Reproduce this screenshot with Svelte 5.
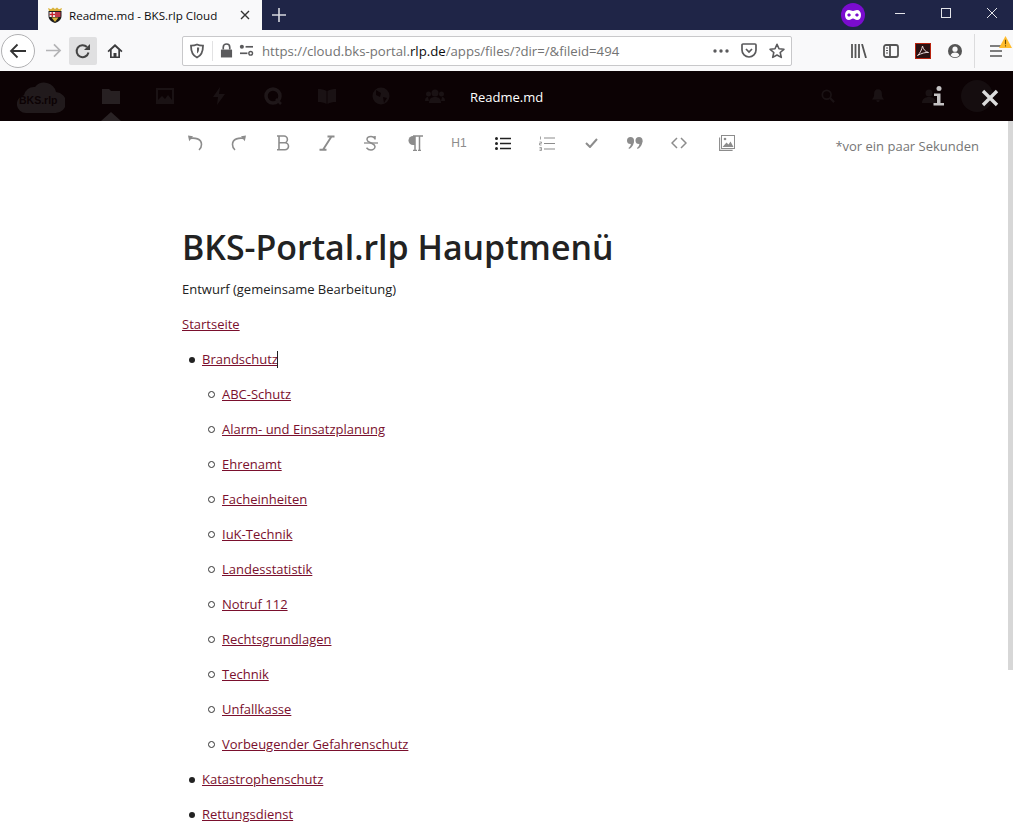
<script>
	const subItems = [
		'ABC-Schutz',
		'Alarm- und Einsatzplanung',
		'Ehrenamt',
		'Facheinheiten',
		'IuK-Technik',
		'Landesstatistik',
		'Notruf 112',
		'Rechtsgrundlagen',
		'Technik',
		'Unfallkasse',
		'Vorbeugender Gefahrenschutz'
	];
</script>

<div class="window">
	<!-- browser tab strip -->
	<div class="tabstrip">
		<div class="tab">
			<svg class="favicon" viewBox="0 0 16 16" width="16" height="16">
				<path d="M1.500 4h13v5c0 3.500-3 6-6.500 7-3.500-1-6.500-3.500-6.500-7z" fill="#1c1c1c" />
				<path d="M2 4L1 1l3 1.200L6 .5 8 2 10 .5l2 1.700L15 1l-1 3z" fill="#d9b23a" />
				<rect x="2.500" y="5" width="5.500" height="5" fill="#eee" />
				<rect x="4.600" y="5" width="1.300" height="5" fill="#c8202c" />
				<rect x="2.500" y="6.800" width="5.500" height="1.300" fill="#c8202c" />
				<rect x="8" y="5" width="5.500" height="5" fill="#c23b4b" />
				<path d="M4.500 10.500h7L8 15z" fill="#d9b23a" />
			</svg>
			<span class="tab-title">Readme.md - BKS.rlp Cloud</span>
			<svg class="tab-close" viewBox="0 0 12 12" width="12" height="12">
				<path d="M2 2l8 8M10 2l-8 8" stroke="#333" stroke-width="1.400" fill="none" />
			</svg>
		</div>
		<svg class="new-tab" viewBox="0 0 14 14" width="14" height="14">
			<path d="M7 0v14M0 7h14" stroke="#d6d7de" stroke-width="1.600" />
		</svg>
		<div class="spacer"></div>
		<div class="private">
			<svg viewBox="0 0 16 10" width="16" height="10">
				<path fill-rule="evenodd" fill="#fff" d="M4 0c1.600 0 2.700 1 4 1s2.400-1 4-1c2.500 0 4 2 4 5s-1.500 5-4 5c-1.600 0-2.700-1.500-4-1.500S5.600 10 4 10C1.500 10 0 8 0 5s1.500-5 4-5zm0 3.500C3 3.500 2.300 4.200 2.300 5S3 6.500 4 6.500 5.800 5.800 5.800 5 5 3.500 4 3.500zm8 0c-1 0-1.800.7-1.800 1.500s.8 1.500 1.800 1.500 1.700-.7 1.700-1.500-.7-1.500-1.700-1.500z" />
			</svg>
		</div>
		<div class="winbtn"><span class="win-min"></span></div>
		<div class="winbtn"><span class="win-max"></span></div>
		<div class="winbtn">
			<svg viewBox="0 0 10 10" width="10" height="10">
				<path d="M0 0l10 10M10 0L0 10" stroke="#e4e5ea" stroke-width="1" />
			</svg>
		</div>
	</div>

	<!-- browser navigation bar -->
	<div class="navbar">
		<div class="back">
			<svg viewBox="0 0 18 16" width="18" height="16">
				<path d="M17 8H2M8.500 1.500L2 8l6.500 6.500" stroke="#333" stroke-width="1.800" fill="none" />
			</svg>
		</div>
		<div class="navbtn">
			<svg viewBox="0 0 18 16" width="17" height="15">
				<path d="M1 8h15M9.500 1.500L16 8l-6.500 6.500" stroke="#b4b4b6" stroke-width="1.800" fill="none" />
			</svg>
		</div>
		<div class="navbtn reload">
			<svg viewBox="0 0 16 16" width="16" height="16">
				<path d="M13.500 9.500A6 6 0 1 1 12 4" stroke="#444" stroke-width="2" fill="none" />
				<path d="M15 1v6H9z" fill="#444" />
			</svg>
		</div>
		<div class="navbtn">
			<svg viewBox="0 0 16 16" width="16" height="16">
				<path d="M8 1L.5 8l1.200 1.200L3 8v7h10V8l1.300 1.200L15.500 8z" fill="#3c3c3e" />
				<path d="M8 3.800l3.300 3v6.700H9.500V10h-3v3.500H4.700V6.800z" fill="#f9f9fa" />
			</svg>
		</div>
		<div class="urlbar">
			<svg class="ub-shield" viewBox="0 0 16 16" width="16" height="16">
				<path d="M8 1.500c2 1 4 1.200 6 1.200 0 6-1.500 9.800-6 11.800C3.500 12.500 2 8.700 2 2.700c2 0 4-.2 6-1.200z" fill="none" stroke="#5a5a5c" stroke-width="1.800" />
				<path d="M8 4.500h2.200c0 3-.6 4.800-2.200 6z" fill="#5a5a5c" />
			</svg>
			<span class="ub-sep"></span>
			<svg class="ub-lock" viewBox="0 0 14 16" width="13" height="15">
				<path d="M1 7h12v8.500H1z" fill="#5a5a5c" />
				<path d="M3.500 7V4.500a3.500 3.500 0 0 1 7 0V7" fill="none" stroke="#5a5a5c" stroke-width="1.800" />
			</svg>
			<svg class="ub-perm" viewBox="0 0 16 14" width="15" height="13">
				<circle cx="3" cy="3" r="2.200" fill="#5a5a5c" />
				<path d="M7 3h8" stroke="#5a5a5c" stroke-width="1.800" />
				<circle cx="12.500" cy="10" r="2" fill="none" stroke="#5a5a5c" stroke-width="1.500" />
				<path d="M1 10h8" stroke="#5a5a5c" stroke-width="1.800" />
			</svg>
			<span class="url">https://cloud.bks-portal.<b>rlp.de</b>/apps/files/?dir=/&amp;fileid=494</span>
			<svg class="ub-dots" viewBox="0 0 16 4" width="16" height="4">
				<circle cx="2" cy="2" r="1.700" fill="#5a5a5c" />
				<circle cx="8" cy="2" r="1.700" fill="#5a5a5c" />
				<circle cx="14" cy="2" r="1.700" fill="#5a5a5c" />
			</svg>
			<svg class="ub-pocket" viewBox="0 0 16 15" width="16" height="15">
				<path d="M2 1h12a1 1 0 0 1 1 1v5a7 7 0 0 1-14 0V2a1 1 0 0 1 1-1z" fill="none" stroke="#5a5a5c" stroke-width="1.700" />
				<path d="M5 6l3 3 3-3" fill="none" stroke="#5a5a5c" stroke-width="1.700" />
			</svg>
			<svg class="ub-star" viewBox="0 0 16 16" width="16" height="16">
				<path d="M8 1.300l2 4.500 4.900.5-3.700 3.200 1.100 4.900L8 12l-4.300 2.400 1.100-4.900L1.100 6.300 6 5.800z" fill="none" stroke="#5a5a5c" stroke-width="1.600" stroke-linejoin="round" />
			</svg>
		</div>
		<div class="tools">
			<svg viewBox="0 0 16 14" width="16" height="14">
				<path d="M1 0v14M4.500 0v14M8 0v14" stroke="#555" stroke-width="1.800" />
				<path d="M11 0l4 14" stroke="#555" stroke-width="1.800" />
			</svg>
			<svg viewBox="0 0 16 14" width="16" height="14">
				<rect x="1" y="1" width="14" height="12" rx="2" fill="none" stroke="#555" stroke-width="1.800" />
				<path d="M7 1v12" stroke="#555" stroke-width="1.800" />
				<path d="M3 4h2M3 6.500h2M3 9h2" stroke="#555" stroke-width="1.200" />
			</svg>
			<svg viewBox="0 0 16 16" width="16" height="16">
				<rect x=".5" y=".5" width="15" height="15" fill="#2b1212" stroke="#b8230f" />
				<path d="M2.500 12.500C5 10.500 7 6 7.500 3c.5 3 3 6 6 6.500-3-.3-7 .7-11 3z" fill="none" stroke="#e8d8d8" stroke-width="1" />
			</svg>
			<svg viewBox="0 0 16 16" width="16" height="16">
				<circle cx="8" cy="8" r="7" fill="#555" />
				<circle cx="8" cy="6.200" r="2.600" fill="#f9f9fa" />
				<path d="M3.500 12.200c1-2 2.500-2.700 4.500-2.700s3.500.7 4.500 2.700a6 6 0 0 1-9 0z" fill="#f9f9fa" />
			</svg>
		</div>
		<span class="tool-sep"></span>
		<div class="menu">
			<svg viewBox="0 0 13 12" width="13" height="12">
				<path d="M0 1h12M0 6h12M0 11h12" stroke="#555" stroke-width="1.600" />
			</svg>
			<svg class="warn" viewBox="0 0 12 11" width="13" height="12">
				<path d="M6 0l6 11H0z" fill="#ffbd2e" />
				<path d="M6 3.500v4M6 8.500v1.200" stroke="#6b4a00" stroke-width="1" />
			</svg>
		</div>
	</div>

	<!-- nextcloud header, dimmed by the viewer overlay -->
	<header class="cloudbar">
		<div class="logo">
			<svg viewBox="0 0 48 36" width="48" height="36">
				<path d="M9 35a9 9 0 0 1-2-17.800A10 10 0 0 1 18 9 12 12 0 0 1 39 14a10.500 10.500 0 0 1-1 21z" fill="#211a1c" />
			</svg>
			<span>BKS.rlp</span>
		</div>
		<div class="apps">
			<div class="app active">
				<svg viewBox="0 0 18 16" width="18" height="16"><path d="M0 1h7l2 2h9v13H0z" fill="#272022" /></svg>
			</div>
			<div class="app">
				<svg viewBox="0 0 18 16" width="18" height="16"><path fill-rule="evenodd" d="M0 0h18v16H0zM2 2v10l4-4 3 3 3-4 4 5V2z" fill="#1a1214" /></svg>
			</div>
			<div class="app">
				<svg viewBox="0 0 12 18" width="12" height="18"><path d="M7 0L0 10h5l-1 8 8-11H6z" fill="#1a1214" /></svg>
			</div>
			<div class="app">
				<svg viewBox="0 0 18 18" width="18" height="18"><circle cx="9" cy="9" r="7" fill="none" stroke="#1f1719" stroke-width="3.500" /><path d="M12 12l5 5" stroke="#1f1719" stroke-width="2.500" /></svg>
			</div>
			<div class="app">
				<svg viewBox="0 0 18 16" width="18" height="16"><path d="M0 1c3 0 6 .5 8.500 2v13C6 14.500 3 14 0 14zM18 1c-3 0-6 .5-8.500 2v13c2.500-1.500 5.500-2 8.500-2z" fill="#1a1214" /></svg>
			</div>
			<div class="app">
				<svg viewBox="0 0 18 18" width="18" height="18"><circle cx="9" cy="9" r="8.500" fill="#1a1214" /><path d="M4 3l5 3-1 4-4-2zM11 10l4 1-3 5z" fill="#0c0204" /></svg>
			</div>
			<div class="app">
				<svg viewBox="0 0 20 14" width="20" height="14"><circle cx="10" cy="4" r="3.500" fill="#1a1214" /><circle cx="3.500" cy="5" r="2.500" fill="#1a1214" /><circle cx="16.500" cy="5" r="2.500" fill="#1a1214" /><path d="M4 14c0-4 2-6 6-6s6 2 6 6zM0 12c0-2.500 1-4 3-4l1 4zM20 12c0-2.500-1-4-3-4l-1 4z" fill="#1a1214" /></svg>
			</div>
		</div>
		<div class="viewer-title">Readme.md</div>
		<div class="right-icons">
			<svg viewBox="0 0 16 16" width="14" height="14"><circle cx="6.500" cy="6.500" r="5" fill="none" stroke="#1a1214" stroke-width="2" /><path d="M10 10l5 5" stroke="#1a1214" stroke-width="2.500" /></svg>
			<svg viewBox="0 0 14 16" width="12" height="14"><path d="M7 0c3 0 4.500 2 4.500 5 0 4 1 5 2.500 7H0c1.500-2 2.500-3 2.500-7C2.500 2 4 0 7 0zM5 13h4a2 2 0 0 1-4 0z" fill="#1a1214" /></svg>
			<svg viewBox="0 0 16 14" width="16" height="14"><circle cx="8" cy="4" r="3.500" fill="#1a1214" /><path d="M1 14c0-4 3-6 7-6s7 2 7 6z" fill="#1a1214" /></svg>
			<div class="avatar"></div>
		</div>
		<div class="viewer-actions">
			<svg viewBox="0 0 12 20" width="12" height="20">
				<circle cx="6" cy="2.500" r="2.500" fill="#c4c2c3" />
				<path d="M1 7.500h6.500V17H11v2.500H.5V17h3.500v-7H1z" fill="#c4c2c3" />
			</svg>
			<svg class="close" viewBox="0 0 18 18" width="18" height="18">
				<path d="M2 2l14 14M16 2L2 16" stroke="#dcdcdc" stroke-width="3.400" />
			</svg>
		</div>
	</header>

	<!-- editor -->
	<div class="body">
		<main class="page">
			<div class="menubar">
				<button aria-label="Rückgängig">
					<svg viewBox="0 0 16 16" width="16" height="16"><path d="M2 3.500c6-1 12.500 0 12.500 6 0 2.500-1 4.300-2.500 5.500" fill="none" stroke="#8c8c8c" stroke-width="1.600" /><path d="M1 .5l5 .8-3.800 5z" fill="#8c8c8c" /></svg>
				</button>
				<button aria-label="Wiederholen">
					<svg viewBox="0 0 16 16" width="16" height="16"><path d="M14 3.500c-6-1-12.500 0-12.500 6 0 2.500 1 4.300 2.500 5.500" fill="none" stroke="#8c8c8c" stroke-width="1.600" /><path d="M15 .5l-5 .8 3.800 5z" fill="#8c8c8c" /></svg>
				</button>
				<button aria-label="Fett">
					<svg viewBox="0 0 14 16" width="14" height="16"><path d="M1 1h7a3.300 3.300 0 0 1 0 6.800H3M3 7.800h6a3.500 3.500 0 0 1 0 7H1M3 1v13.800" fill="none" stroke="#8c8c8c" stroke-width="1.600" /></svg>
				</button>
				<button aria-label="Kursiv">
					<svg viewBox="0 0 16 16" width="16" height="16"><path d="M8.500 1.500H15.500M.5 14.800h7M12.500 1.500L4 14.800" fill="none" stroke="#8c8c8c" stroke-width="1.900" /></svg>
				</button>
				<button aria-label="Durchgestrichen">
					<svg viewBox="0 0 16 16" width="16" height="16"><path d="M1 8h14" stroke="#8c8c8c" stroke-width="1.300" /><path d="M12 3.500C11 2 9.500 1.500 8 1.500 6 1.500 4 2.500 4 4.500S6 7 8 8s4 1.500 4 3.500-2 3.500-4 3.500-3.500-1-4.500-2.300M12 1v3.500" fill="none" stroke="#8c8c8c" stroke-width="1.500" /></svg>
				</button>
				<button aria-label="Absatz">
					<svg viewBox="0 0 16 16" width="16" height="16"><path d="M6 1h10M8 1v14.500M12.500 1v14.500M6 15.500h4M11 15.500h3" fill="none" stroke="#8c8c8c" stroke-width="1.500" /><path d="M6 1a4.500 4.500 0 0 0 0 9h2V1z" fill="#8c8c8c" /></svg>
				</button>
				<button class="text-btn">H1</button>
				<button aria-label="Liste">
					<svg viewBox="0 0 16 13" width="16" height="13"><circle cx="1.500" cy="1.500" r="1.500" fill="#222" /><circle cx="1.500" cy="6.500" r="1.500" fill="#222" /><circle cx="1.500" cy="11.500" r="1.500" fill="#222" /><path d="M5 1.500h11M5 6.500h11M5 11.500h11" stroke="#222" stroke-width="1.300" /></svg>
				</button>
				<button aria-label="Nummerierte Liste">
					<svg viewBox="0 0 16 15" width="16" height="15"><path d="M5 2h11M5 7.500h11M5 13h11" stroke="#8c8c8c" stroke-width="1.200" /><path d="M1.500.5v3M.5 6h2v1.300h-2V9h2M.5 11.500h2v3h-2M.5 13h2" fill="none" stroke="#8c8c8c" stroke-width=".8" /></svg>
				</button>
				<button aria-label="Aufgabe">
					<svg viewBox="0 0 13 10" width="13" height="10"><path d="M1 5l4 4 7-8" fill="none" stroke="#8c8c8c" stroke-width="2" /></svg>
				</button>
				<button aria-label="Zitat">
					<svg viewBox="0 0 16 12" width="16" height="12"><circle cx="3.500" cy="3.500" r="3.500" fill="#8c8c8c" /><circle cx="12" cy="3.500" r="3.500" fill="#8c8c8c" /><path d="M7 3.500C7 8 4.500 11 2 12l-.5-1C3 10 4 8 4 6zM15.500 3.500c0 4.500-2.500 7.500-5 8.500L10 11c1.500-1 2.500-3 2.500-5z" fill="#8c8c8c" /></svg>
				</button>
				<button aria-label="Code">
					<svg viewBox="0 0 16 12" width="16" height="12"><path d="M6 1L1 6l5 5M10 1l5 5-5 5" fill="none" stroke="#8c8c8c" stroke-width="1.500" /></svg>
				</button>
				<button class="image-btn" aria-label="Bild">
					<svg viewBox="0 0 16 16" width="16" height="16"><path d="M.6 2.500V15.400h13" fill="none" stroke="#8c8c8c" stroke-width="1.100" /><rect x="2.500" y=".5" width="13" height="13" fill="none" stroke="#8c8c8c" /><circle cx="6" cy="4" r="1.300" fill="#8c8c8c" /><path d="M3.500 12l4-4.500 2 2 2-3 3 5.500z" fill="#8c8c8c" /></svg>
				</button>
				<span class="saved">*vor ein paar Sekunden</span>
			</div>

			<article class="content">
				<h1>BKS-Portal.rlp Hauptmenü</h1>
				<p>Entwurf (gemeinsame Bearbeitung)</p>
				<p><a href="#start">Startseite</a></p>
				<ul>
					<li>
						<p><a href="#brand">Brandschutz</a><span class="caret"></span></p>
						<ul>
							{#each subItems as item}
								<li><p><a href="#sub">{item}</a></p></li>
							{/each}
						</ul>
					</li>
					<li><p><a href="#kat">Katastrophenschutz</a></p></li>
					<li><p><a href="#ret">Rettungsdienst</a></p></li>
				</ul>
			</article>
		</main>
		<div class="scrollbar"><div class="thumb"></div></div>
	</div>
</div>

<style>
	:global(body) {
		margin: 0;
		overflow: hidden;
		background: #fff;
	}

	.window {
		display: flex;
		flex-direction: column;
		height: 836px;
		overflow: hidden;
		font-family: "Open Sans", "Noto Sans", sans-serif;
		color: #222;
	}

	/* tab strip */
	.tabstrip {
		display: flex;
		align-items: center;
		height: 30px;
		flex: none;
		background: #1f2547;
		padding-left: 38px;
		margin-right: -2px;
	}

	.tab {
		display: flex;
		align-items: center;
		align-self: stretch;
		width: 224px;
		box-sizing: border-box;
		padding: 0 10px 0 9px;
		background: #f9f9fa;
	}

	.tab-title {
		margin-left: 6px;
		font: 11.600px "Open Sans", sans-serif;
		color: #0c0c0d;
		white-space: nowrap;
		flex: 1;
	}

	.tab-close {
		margin-right: 1px;
	}

	.new-tab {
		margin-left: 10px;
	}

	.spacer {
		flex: 1;
	}

	.private {
		display: flex;
		align-items: center;
		justify-content: center;
		width: 24px;
		height: 24px;
		border-radius: 50%;
		background: #7a0ccf;
		margin-right: 12px;
	}

	.winbtn {
		display: flex;
		align-items: center;
		justify-content: center;
		width: 46px;
		height: 26px;
		margin-bottom: 4px;
	}

	.win-min {
		display: block;
		width: 10px;
		height: 1px;
		background: #e4e5ea;
	}

	.win-max {
		display: block;
		width: 8px;
		height: 8px;
		border: 1px solid #e4e5ea;
	}

	/* nav bar */
	.navbar {
		display: flex;
		align-items: center;
		height: 41px;
		flex: none;
		box-sizing: border-box;
		padding-left: 1px;
		background: #f9f9fa;
	}

	.back {
		display: flex;
		align-items: center;
		justify-content: center;
		width: 32px;
		height: 32px;
		border: 1px solid #b1b1b3;
		border-radius: 50%;
		background: #fff;
	}

	.navbtn {
		display: flex;
		align-items: center;
		justify-content: center;
		width: 28px;
		height: 28px;
		border-radius: 2px;
	}

	.back + .navbtn {
		margin-left: 2px;
		width: 32px;
	}

	.reload {
		background: #e0e0e1;
	}

	.reload + .navbtn {
		margin-left: 4px;
	}

	.urlbar {
		display: flex;
		align-items: center;
		box-sizing: border-box;
		width: 610px;
		height: 30px;
		margin-left: 53px;
		background: #fff;
		border: 1px solid #c8c8ca;
		border-radius: 2px;
	}

	.ub-shield {
		margin-left: 6px;
	}

	.ub-sep {
		width: 1px;
		height: 20px;
		margin: 0 7px;
		background: #e2e2e3;
	}

	.ub-perm {
		margin-left: 6px;
	}

	.url {
		flex: 1;
		margin-left: 8px;
		font: 13.200px "Open Sans", sans-serif;
		color: #737373;
		white-space: nowrap;
	}

	.url b {
		font-weight: 400;
		color: #0c0c0d;
	}

	.ub-pocket {
		margin-left: 12px;
	}

	.ub-star {
		margin: 0 6px 0 12px;
	}

	.tools {
		display: flex;
		align-items: center;
		gap: 16px;
		margin-left: 59px;
	}

	.tool-sep {
		width: 1px;
		height: 34px;
		margin-left: 11px;
		background: #dcdcdd;
	}

	.menu {
		position: relative;
		display: flex;
		margin-left: 15px;
	}

	.warn {
		position: absolute;
		left: 9px;
		top: -9px;
	}

	/* dimmed cloud header */
	.cloudbar {
		position: relative;
		display: flex;
		align-items: center;
		flex: none;
		height: 50px;
		background: #0c0204;
	}

	.logo {
		position: relative;
		display: flex;
		margin-left: 17px;
	}

	.logo span {
		position: absolute;
		left: 2px;
		top: 16px;
		font: bold 10.500px "Liberation Sans", sans-serif;
		color: #0c0204;
	}

	.apps {
		display: flex;
		margin-left: 19px;
		align-self: stretch;
	}

	.app {
		position: relative;
		display: flex;
		align-items: center;
		justify-content: center;
		width: 54px;
	}

	.app.active::after {
		content: "";
		position: absolute;
		bottom: 0;
		left: 50%;
		margin-left: -10px;
		border: 10px solid transparent;
		border-top: 0;
		border-bottom: 9px solid #2a2325;
	}

	.viewer-title {
		position: absolute;
		left: 0;
		right: 0;
		margin-top: 2px;
		text-align: center;
		font: 13px "Open Sans", sans-serif;
		color: #fff;
	}

	.right-icons {
		display: flex;
		align-items: center;
		margin-left: auto;
		padding-right: 20px;
		gap: 37px;
	}

	.avatar {
		width: 32px;
		height: 32px;
		margin-left: -13px;
		border-radius: 50%;
		background: #150d0f;
	}

	.viewer-actions {
		position: absolute;
		top: 15px;
		right: 14px;
		display: flex;
		align-items: flex-start;
		gap: 36px;
	}

	.close {
		margin-top: 3px;
	}

	/* editor */
	.body {
		display: flex;
		flex: 1;
		min-height: 0;
	}

	.page {
		flex: 1;
		min-width: 0;
	}

	.menubar {
		display: flex;
		align-items: flex-start;
		padding: 0 29px 0 173px;
	}

	.menubar button {
		display: flex;
		align-items: center;
		justify-content: center;
		width: 44px;
		height: 44px;
		padding: 0;
		border: 0;
		background: none;
	}

	.text-btn {
		font: 12px "Liberation Sans", sans-serif;
		color: #8c8c8c;
	}

	.image-btn {
		margin-left: 4px;
	}

	.saved {
		margin-left: auto;
		padding-top: 15px;
		font-size: 13px;
		line-height: 20px;
		color: #767676;
		white-space: nowrap;
	}

	.content {
		padding: 0 0 0 182px;
		font-size: 13px;
		line-height: 21px;
		color: #222;
	}

	h1 {
		margin: 56px 0 6px;
		font-size: 33.900px;
		line-height: 52px;
		font-weight: 600;
		color: #222;
	}

	p {
		margin: 0 0 14px;
	}

	a {
		color: #7a0f2d;
		text-decoration: underline;
	}

	ul {
		margin: 0;
		padding: 0 0 0 20px;
		list-style: none;
	}

	li {
		position: relative;
	}

	li::before {
		content: "";
		position: absolute;
		left: -13px;
		top: 8px;
		width: 6px;
		height: 6px;
		border-radius: 50%;
		background: #222;
	}

	li li::before {
		left: -14px;
		top: 7px;
		box-sizing: border-box;
		width: 7px;
		height: 7px;
		border: 1px solid #333;
		background: none;
	}

	.caret {
		display: inline-block;
		width: 1px;
		height: 17px;
		margin-left: -1px;
		vertical-align: -4px;
		background: #222;
	}

	.scrollbar {
		flex: none;
		width: 5px;
	}

	.thumb {
		height: 549px;
		background: #d7d7d7;
	}
</style>
